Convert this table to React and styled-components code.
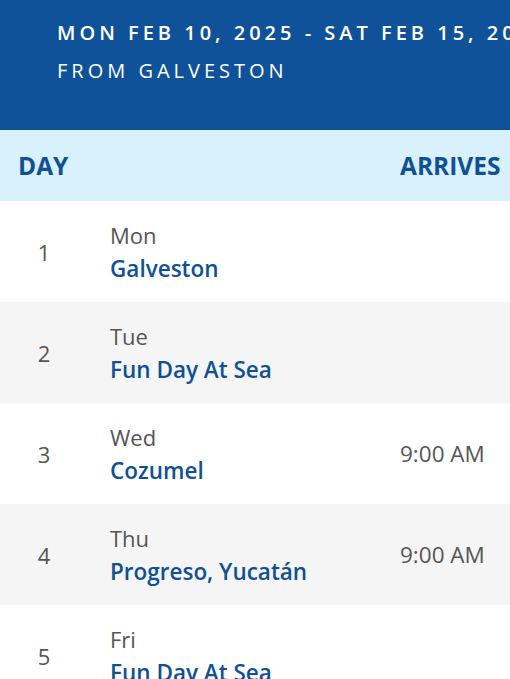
import styled, { createGlobalStyle } from "styled-components"

const Global = createGlobalStyle`
body {
  margin: 0;
  font-family: "Open Sans", "Noto Sans", sans-serif;
  background: #fff;
  overflow: hidden;
}
`
const Page = styled.div`
width: 510px;
overflow: hidden;
`
const Banner = styled.div`
height: 130px;
background: #10529a;
color: #fff;
padding: 14px 0 0 57px;
box-sizing: border-box;
white-space: nowrap;
`
const BannerLine = styled.div`
font-size: 20px;
letter-spacing: 4px;
line-height: 38px;
font-weight: ${(props) => props.strong ? 600 : 400};
`
const Head = styled.div`
display: grid;
grid-template-columns: 52px 1fr 110px;
column-gap: 40px;
align-items: center;
height: 71px;
padding-left: 18px;
background: #d9f1fc;
color: #0f5097;
font-weight: 700;
font-size: 24.5px;
`
const Row = styled.div`
display: grid;
grid-template-columns: 52px 1fr 110px;
column-gap: 40px;
align-items: center;
height: 101px;
padding-left: 18px;
background: ${(props) => props.shade ? "#f5f5f5" : "#fff"};
`
const Num = styled.div`
text-align: center;
font-size: 22px;
color: #555;
`
const Stop = styled.div`
display: flex;
flex-direction: column;
`
const DayName = styled.span`
font-size: 22px;
line-height: 33px;
color: #555;
`
const Port = styled.span`
font-size: 22.5px;
line-height: 33px;
font-weight: 600;
color: #0f5097;
white-space: nowrap;
`
const Time = styled.div`
font-size: 22.5px;
color: #555;
white-space: nowrap;
`

const days = [
  { n: 1, day: "Mon", port: "Galveston", time: "" },
  { n: 2, day: "Tue", port: "Fun Day At Sea", time: "" },
  { n: 3, day: "Wed", port: "Cozumel", time: "9:00 AM" },
  { n: 4, day: "Thu", port: "Progreso, Yucatán", time: "9:00 AM" },
  { n: 5, day: "Fri", port: "Fun Day At Sea", time: "" },
]

const App = () => {
  return (
    <Page>
      <Global />
      <Banner>
        <BannerLine strong>MON FEB 10, 2025 - SAT FEB 15, 2025</BannerLine>
        <BannerLine>FROM GALVESTON</BannerLine>
      </Banner>
      <Head>
        <span>DAY</span>
        <span></span>
        <span>ARRIVES</span>
      </Head>
      {days.map((d, i) => (
        <Row key={d.n} shade={i % 2 === 1}>
          <Num>{d.n}</Num>
          <Stop>
            <DayName>{d.day}</DayName>
            <Port>{d.port}</Port>
          </Stop>
          <Time>{d.time}</Time>
        </Row>
      ))}
    </Page>
  )
}

export default App
